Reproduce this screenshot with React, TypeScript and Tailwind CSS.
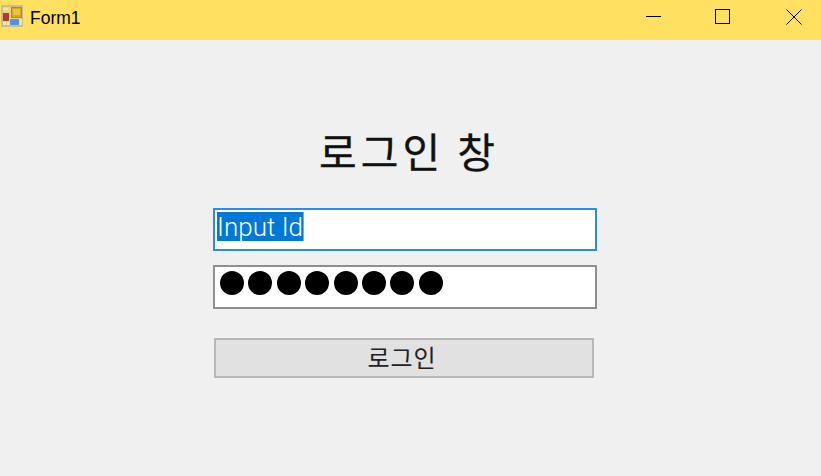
const uiFont = "font-['Noto_Sans_CJK_KR','Noto_Sans',sans-serif]";

function FormIcon() {
  return (
    <svg width="22" height="22" viewBox="0 0 22 22" className="shrink-0">
      <rect x="1" y="1" width="20" height="20" fill="#ecd67e" stroke="#c4bc9e" strokeWidth="2" />
      <rect x="2" y="3" width="5" height="2" fill="#f2e6a8" />
      <rect x="2" y="17" width="3" height="3" fill="#f2e6a8" />
      <rect x="6" y="17" width="2" height="3" fill="#f2e6a8" />
      <rect x="2.5" y="8.5" width="5" height="7" fill="#c8322a" stroke="#96453a" />
      <rect x="10.5" y="2.5" width="10" height="10" fill="#dca61c" stroke="#ad8a2c" />
      <rect x="12" y="4" width="7" height="6" fill="#f0c040" />
      <rect x="9" y="14" width="9" height="6" rx="1" fill="#4f92e6" />
      <rect x="19" y="14" width="2" height="6" fill="#f2e6a8" />
    </svg>
  );
}

function WindowButtons() {
  return (
    <div className="flex h-full items-start pt-[9px] pr-[19px] gap-[54px]">
      <svg width="15" height="15" viewBox="0 0 15 15">
        <path d="M0 7.5H15" stroke="#000" strokeWidth="1" />
      </svg>
      <svg width="15" height="15" viewBox="0 0 15 15">
        <rect x="0.5" y="0.5" width="14" height="14" fill="none" stroke="#000" strokeWidth="1" />
      </svg>
      <svg width="16" height="16" viewBox="0 0 16 16" className="ml-0.5">
        <path d="M0.5 0.5L15.5 15.5M15.5 0.5L0.5 15.5" stroke="#000" strokeWidth="1" />
      </svg>
    </div>
  );
}

export default function App() {
  return (
    <div className={`w-[821px] h-[476px] overflow-hidden bg-[#f0f0f0] flex flex-col ${uiFont}`}>
      {/* Title bar */}
      <div className="h-10 shrink-0 bg-[#ffe060] flex items-start justify-between">
        <div className="flex items-start gap-[7px] pl-px pt-[5px]">
          <FormIcon />
          <span className="font-['Liberation_Sans',sans-serif] text-[17.5px] leading-none text-black pt-[5px]">Form1</span>
        </div>
        <WindowButtons />
      </div>

      {/* Form */}
      <div className="flex flex-col pl-[213px] pt-[84px]">
        <h1 className="w-[388px] h-[52px] pl-[4px] flex items-center justify-center text-[41px] leading-none font-normal text-[#111] tracking-[4px] [-webkit-text-stroke:0.3px_#111]">
          로그인 창
        </h1>

        <div className="mt-[32px] w-[384px] h-[43px] bg-white border-2 border-[#2a8fe0] flex items-start pl-[2px] pt-[2px]">
          <span className="h-[29px] bg-[#0078d7] border-r border-[#f09040] text-white font-['Roboto',sans-serif] text-[26px] leading-[30px] font-light">
            Input Id
          </span>
        </div>

        <div className="mt-[14px] w-[384px] h-[44px] bg-white border-2 border-[#8f8f8f] flex items-start gap-[4.4px] pl-[5px] pt-[4px]">
          {[0, 1, 2, 3, 4, 5, 6, 7].map((i) => (
            <div key={i} className="w-6 h-6 rounded-full bg-black" />
          ))}
        </div>

        <button className="mt-[29px] ml-px w-[380px] h-10 pb-[2px] pr-[4px] bg-[#e1e1e1] border-2 border-[#b8b8b8] flex items-center justify-center text-[24px] leading-none text-[#222] tracking-[1px]">
          로그인
        </button>
      </div>
    </div>
  );
}
